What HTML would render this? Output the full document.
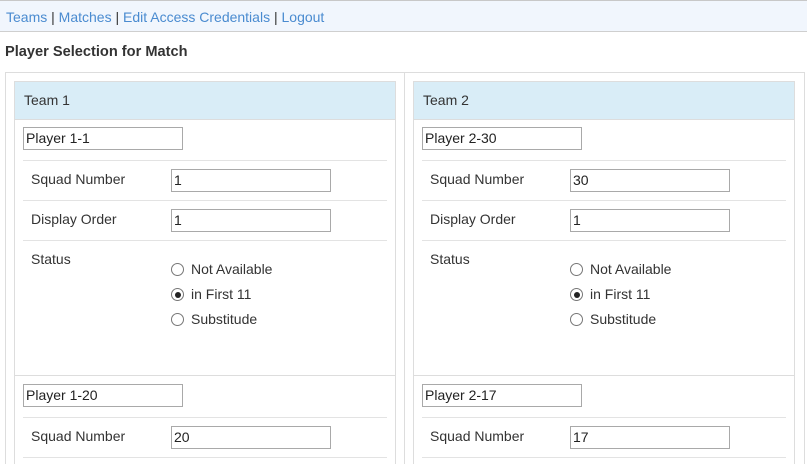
<!DOCTYPE html>
<html style="overflow:hidden;height:464px"><head><meta charset="utf-8"><style>
*{margin:0;padding:0;box-sizing:border-box}
body{width:807px;height:464px;overflow:hidden;background:#fff;font-family:"Liberation Sans",Arial,sans-serif;font-size:14px;color:#333;position:relative}
.a{position:absolute}
.nav{left:0;top:0;width:807px;height:32px;background:#f1f6fd;border-top:1px solid #c8c8c8;border-bottom:1px solid #cfcfcf}
.nav span{position:absolute;left:6px;top:8px;font-size:14px;color:#4a8bd0;white-space:nowrap}
.nav b{font-weight:normal;color:#333}
h1{position:absolute;left:5px;top:44px;font-size:14.6px;font-weight:bold;color:#333}
.outer{left:5px;top:72px;width:800px;height:392px;border:1px solid #ddd;border-bottom:none}
.div{left:404px;top:72px;width:1px;height:392px;background:#ddd}
.panel{width:382px;height:383px;border:1px solid #ddd;border-bottom:none}
.hd{height:38px;background:#d9edf7;border-bottom:1px solid #ddd;padding:10px 0 0 9px;font-size:14px}
.in{position:absolute;height:23px;border:1px solid #a9a9a9;font-size:14px;padding:2px 0 0 2px;color:#222;background:#fff}
.ln{position:absolute;height:1px;background:#e3e3e3}
.lb{position:absolute;font-size:14px}
.r{position:absolute;width:13px;height:13px;border:1px solid #777;border-radius:50%;background:#fff}
.r.on::after{content:"";position:absolute;left:2.5px;top:2.5px;width:6px;height:6px;border-radius:50%;background:#222}
</style></head><body>
<div class="a nav"><span>Teams <b>|</b> Matches <b>|</b> Edit Access Credentials <b>|</b> Logout</span></div>
<h1>Player Selection for Match</h1>
<div class="a outer"></div>
<div class="a div"></div>

<div class="a panel" style="left:14px;top:81px"><div class="hd">Team 1</div></div>
<div class="a panel" style="left:413px;top:81px"><div class="hd">Team 2</div></div>

<!-- Team 1 -->
<div class="in" style="left:23px;top:127px;width:160px">Player 1-1</div>
<div class="ln" style="left:23px;top:160px;width:364px"></div>
<div class="lb" style="left:31px;top:171px">Squad Number</div>
<div class="in" style="left:171px;top:169px;width:160px">1</div>
<div class="ln" style="left:23px;top:200px;width:364px"></div>
<div class="lb" style="left:31px;top:211px">Display Order</div>
<div class="in" style="left:171px;top:209px;width:160px">1</div>
<div class="ln" style="left:23px;top:240px;width:364px"></div>
<div class="lb" style="left:31px;top:251px">Status</div>
<div class="r" style="left:171px;top:263px"></div><div class="lb" style="left:191px;top:261px">Not Available</div>
<div class="r on" style="left:171px;top:288px"></div><div class="lb" style="left:191px;top:286px">in First 11</div>
<div class="r" style="left:171px;top:313px"></div><div class="lb" style="left:191px;top:311px">Substitude</div>
<div class="ln" style="left:15px;top:375px;width:380px;background:#ddd"></div>
<div class="in" style="left:23px;top:384px;width:160px">Player 1-20</div>
<div class="ln" style="left:23px;top:417px;width:364px"></div>
<div class="lb" style="left:31px;top:428px">Squad Number</div>
<div class="in" style="left:171px;top:426px;width:160px">20</div>
<div class="ln" style="left:23px;top:457px;width:364px"></div>

<!-- Team 2 -->
<div class="in" style="left:422px;top:127px;width:160px">Player 2-30</div>
<div class="ln" style="left:422px;top:160px;width:364px"></div>
<div class="lb" style="left:430px;top:171px">Squad Number</div>
<div class="in" style="left:570px;top:169px;width:160px">30</div>
<div class="ln" style="left:422px;top:200px;width:364px"></div>
<div class="lb" style="left:430px;top:211px">Display Order</div>
<div class="in" style="left:570px;top:209px;width:160px">1</div>
<div class="ln" style="left:422px;top:240px;width:364px"></div>
<div class="lb" style="left:430px;top:251px">Status</div>
<div class="r" style="left:570px;top:263px"></div><div class="lb" style="left:590px;top:261px">Not Available</div>
<div class="r on" style="left:570px;top:288px"></div><div class="lb" style="left:590px;top:286px">in First 11</div>
<div class="r" style="left:570px;top:313px"></div><div class="lb" style="left:590px;top:311px">Substitude</div>
<div class="ln" style="left:414px;top:375px;width:380px;background:#ddd"></div>
<div class="in" style="left:422px;top:384px;width:160px">Player 2-17</div>
<div class="ln" style="left:422px;top:417px;width:364px"></div>
<div class="lb" style="left:430px;top:428px">Squad Number</div>
<div class="in" style="left:570px;top:426px;width:160px">17</div>
<div class="ln" style="left:422px;top:457px;width:364px"></div>
</body></html>
